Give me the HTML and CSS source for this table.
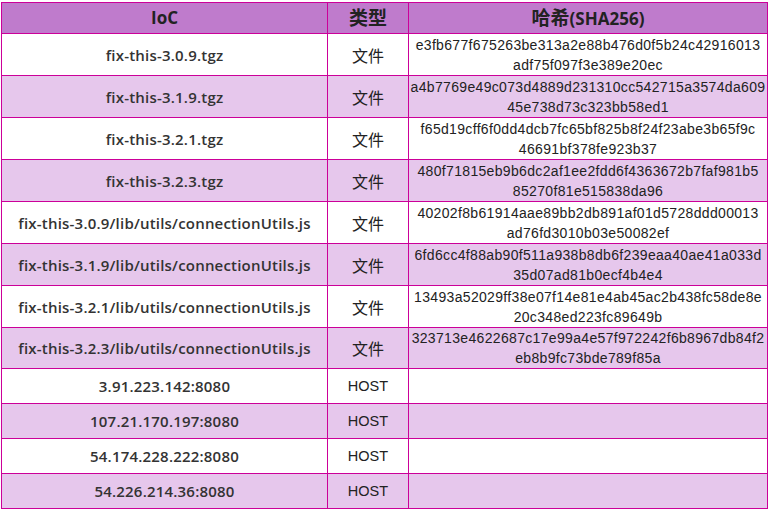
FILE: index.html
```html
<!DOCTYPE html>
<html lang="zh">
<head>
<meta charset="utf-8">
<title>IoC</title>
<link rel="stylesheet" href="styles.css">
</head>
<body>
<table class="ioc">
  <colgroup>
    <col class="c1"><col class="c2"><col class="c3">
  </colgroup>
  <thead>
    <tr class="head"><th>IoC</th><th><span class="zh">类型</span></th><th><span class="zh">哈希</span>(SHA256)</th></tr>
  </thead>
  <tbody>
    <tr class="file"><td class="name">fix-this-3.0.9.tgz</td><td class="type cjk">文件</td><td class="hash"><span>e3fb677f675263be313a2e88b476d0f5b24c42916013</span><span>adf75f097f3e389e20ec</span></td></tr>
    <tr class="file alt"><td class="name">fix-this-3.1.9.tgz</td><td class="type cjk">文件</td><td class="hash"><span>a4b7769e49c073d4889d231310cc542715a3574da609</span><span>45e738d73c323bb58ed1</span></td></tr>
    <tr class="file"><td class="name">fix-this-3.2.1.tgz</td><td class="type cjk">文件</td><td class="hash"><span>f65d19cff6f0dd4dcb7fc65bf825b8f24f23abe3b65f9c</span><span>46691bf378fe923b37</span></td></tr>
    <tr class="file alt"><td class="name">fix-this-3.2.3.tgz</td><td class="type cjk">文件</td><td class="hash"><span>480f71815eb9b6dc2af1ee2fdd6f4363672b7faf981b5</span><span>85270f81e515838da96</span></td></tr>
    <tr class="file"><td class="name">fix-this-3.0.9/lib/utils/connectionUtils.js</td><td class="type cjk">文件</td><td class="hash"><span>40202f8b61914aae89bb2db891af01d5728ddd00013</span><span>ad76fd3010b03e50082ef</span></td></tr>
    <tr class="file alt"><td class="name">fix-this-3.1.9/lib/utils/connectionUtils.js</td><td class="type cjk">文件</td><td class="hash"><span>6fd6cc4f88ab90f511a938b8db6f239eaa40ae41a033d</span><span>35d07ad81b0ecf4b4e4</span></td></tr>
    <tr class="file"><td class="name">fix-this-3.2.1/lib/utils/connectionUtils.js</td><td class="type cjk">文件</td><td class="hash"><span>13493a52029ff38e07f14e81e4ab45ac2b438fc58de8e</span><span>20c348ed223fc89649b</span></td></tr>
    <tr class="file alt last"><td class="name">fix-this-3.2.3/lib/utils/connectionUtils.js</td><td class="type cjk">文件</td><td class="hash"><span>323713e4622687c17e99a4e57f972242f6b8967db84f2</span><span>eb8b9fc73bde789f85a</span></td></tr>
    <tr class="host"><td class="name">3.91.223.142:8080</td><td class="type">HOST</td><td class="hash"></td></tr>
    <tr class="host alt"><td class="name">107.21.170.197:8080</td><td class="type">HOST</td><td class="hash"></td></tr>
    <tr class="host"><td class="name">54.174.228.222:8080</td><td class="type">HOST</td><td class="hash"></td></tr>
    <tr class="host alt"><td class="name">54.226.214.36:8080</td><td class="type">HOST</td><td class="hash"></td></tr>
  </tbody>
</table>
</body>
</html>
```

FILE: styles.css
```css
html, body {
  margin: 0;
  padding: 0;
  background: #ffffff;
}
body {
  padding: 2px 0 0 1px;
  font-family: "Liberation Sans", Arial, "Noto Sans CJK SC", sans-serif;
  color: #222222;
}
.ioc {
  border-collapse: collapse;
  table-layout: fixed;
  width: 766px;
}
.c1 { width: 326px; }
.c2 { width: 81px; }
.c3 { width: 359px; }
.ioc th, .ioc td {
  border: 1px solid #cc0099;
  text-align: center;
  vertical-align: middle;
  padding: 0;
  line-height: 20px;
}
.head th {
  background: #bf7bcc;
  height: 30px;
  font-family: "Open Sans", "Liberation Sans", "Noto Sans CJK SC", sans-serif;
  font-size: 17px;
  font-weight: 700;
  color: #222222;
}
.head .zh {
  font-family: "Noto Sans CJK SC", sans-serif;
  font-size: 19px;
}
.file td { height: 41px; }
.file.last td { height: 39px; }
.host td { height: 34px; }
.alt td { background: #e6c7ec; }
.name {
  font-family: "Open Sans", "Liberation Sans", sans-serif;
  font-size: 15px;
  font-weight: 600;
  letter-spacing: 0.2px;
  color: #333333;
}
.type {
  font-size: 14.5px;
  color: #222222;
}
.type.cjk {
  font-family: "Noto Sans CJK SC", sans-serif;
  font-size: 16px;
}
.hash {
  font-size: 14px;
  letter-spacing: 0.33px;
  color: #222222;
}
.hash span {
  display: block;
  white-space: nowrap;
}
```
